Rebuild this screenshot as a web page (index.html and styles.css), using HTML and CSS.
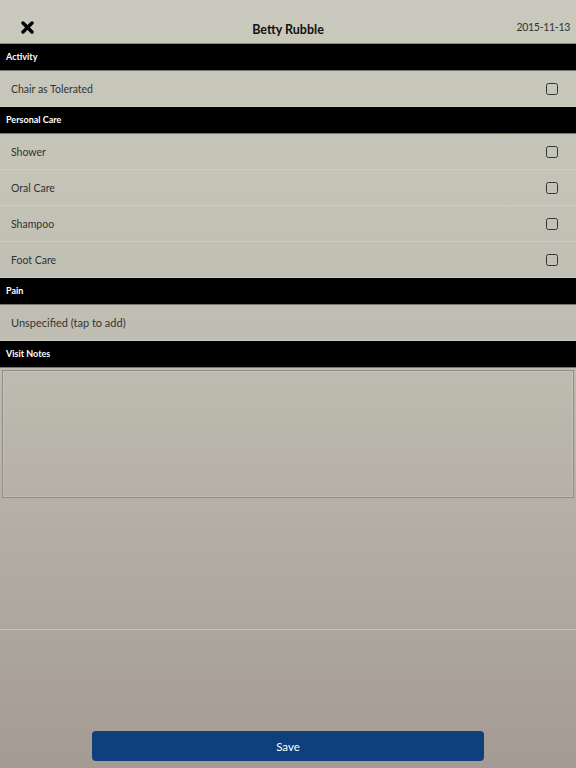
FILE: index.html
```html
<!DOCTYPE html>
<html lang="en">
<head>
    <meta charset="UTF-8">
    <meta name="viewport" content="width=device-width, initial-scale=1.0">
    <title>Visit - Betty Rubble</title>
    <link rel="stylesheet" href="styles.css">
</head>
<body>
    <div class="screen">
        <div class="topbar">
            <button class="close-btn" aria-label="Close">
                <svg width="13" height="13" viewBox="0 0 13 13">
                    <path d="M2 2 L11 11 M11 2 L2 11" stroke="#000" stroke-width="3.4" stroke-linecap="round"/>
                </svg>
            </button>
            <div class="title">Betty Rubble</div>
            <div class="date">2015-11-13</div>
        </div>

        <div class="section-head">Activity</div>
        <div class="row">
            <span>Chair as Tolerated</span>
            <span class="check"></span>
        </div>

        <div class="section-head">Personal Care</div>
        <div class="row">
            <span>Shower</span>
            <span class="check"></span>
        </div>
        <div class="row">
            <span>Oral Care</span>
            <span class="check"></span>
        </div>
        <div class="row">
            <span>Shampoo</span>
            <span class="check"></span>
        </div>
        <div class="row">
            <span>Foot Care</span>
            <span class="check"></span>
        </div>

        <div class="section-head">Pain</div>
        <div class="row row-wide">
            <span>Unspecified (tap to add)</span>
        </div>

        <div class="section-head">Visit Notes</div>
        <div class="notes-wrap">
            <textarea class="notes"></textarea>
        </div>

        <div class="spacer"></div>
        <div class="footer">
            <button class="save-btn">Save</button>
        </div>
    </div>
</body>
</html>
```

FILE: styles.css
```css
html, body {
    margin: 0;
    padding: 0;
    height: 100%;
}
body {
    font-family: Lato, "Open Sans", sans-serif;
    background: linear-gradient(to bottom, #c9cabd 0%, #bfbdb1 45%, #a49b94 100%);
    color: #222;
}
.screen {
    display: flex;
    flex-direction: column;
    height: 768px;
}
.topbar {
    height: 43px;
    display: flex;
    align-items: center;
    position: relative;
    border-bottom: 1px solid #8a8b82;
}
.close-btn {
    background: none;
    border: none;
    padding: 0;
    margin: 11px 0 0 21px;
    width: 13px;
    height: 13px;
    display: flex;
}
.title {
    position: absolute;
    left: 0;
    right: 0;
    top: 22px;
    text-align: center;
    font-weight: bold;
    font-size: 12.5px;
    color: #111;
    pointer-events: none;
}
.date {
    margin-left: auto;
    margin-right: 6px;
    margin-top: 10px;
    font-size: 10.5px;
    letter-spacing: -0.3px;
    color: #333;
}
.section-head {
    background: #000;
    color: #fff;
    font-weight: bold;
    font-size: 9px;
    height: 26px;
    line-height: 26px;
    padding-left: 6px;
    border-bottom: 1px solid #76756d;
}
.row {
    height: 35px;
    display: flex;
    align-items: center;
    justify-content: space-between;
    padding: 0 18px 0 11px;
    font-size: 10.5px;
    color: #333;
    border-bottom: 1px solid rgba(255, 255, 255, 0.18);
}
.row-wide {
    font-size: 11px;
}
.check {
    width: 10px;
    height: 10px;
    border: 1.5px solid #333;
    border-radius: 2.5px;
}
.notes-wrap {
    padding: 2px 2px 0 2px;
}
.notes {
    display: block;
    box-sizing: border-box;
    width: 100%;
    height: 128px;
    margin: 0;
    background: transparent;
    border: 1px solid #8f8c84;
    box-shadow: inset 0 0 0 1px rgba(255, 255, 255, 0.15);
    resize: none;
    font-family: inherit;
}
.spacer {
    height: 131px;
    border-bottom: 1px solid rgba(255, 255, 255, 0.3);
}
.footer {
    flex: 1;
    display: flex;
    justify-content: center;
    align-items: flex-end;
    padding-bottom: 7px;
}
.save-btn {
    width: 392px;
    height: 30px;
    background: #10407c;
    color: #fff;
    border: none;
    border-radius: 4px;
    font-family: inherit;
    font-size: 11.5px;
}
```
